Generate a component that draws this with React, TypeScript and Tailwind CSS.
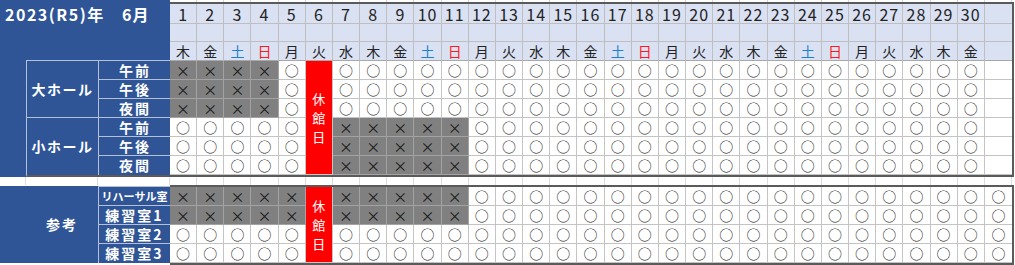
const weekdays = ["木", "金", "土", "日", "月", "火", "水"];
const cols = Array.from({ length: 31 }, (_, i) => i);

type Mark = "x" | "o" | "e";

const topRows: Mark[][] = Array.from({ length: 6 }, (_, r) =>
  cols.map((c) => {
    if (c === 30) return "e";
    if (r < 3) return c < 4 ? "x" : "o";
    return c >= 6 && c <= 10 ? "x" : "o";
  })
);

const refRows: Mark[][] = Array.from({ length: 4 }, (_, r) =>
  cols.map((c) => {
    if (r < 2 && (c < 5 || (c >= 6 && c <= 10))) return "x";
    return "o";
  })
);

const dayColor = (c: number) => {
  const w = weekdays[c % 7];
  if (w === "土") return "text-[#1f7fd0]";
  if (w === "日") return "text-[#ff1a1a]";
  return "text-[#222]";
};

const BodyCell = ({ mark, last }: { mark: Mark; last: boolean }) => (
  <div
    className={`flex items-center justify-center border-b text-[14px] leading-none ${
      last ? "" : "border-r"
    } ${
      mark === "x"
        ? "bg-[#808080] border-[#a3a3a3] text-[#1a1a1a]"
        : "bg-white border-[#c4c4c4] text-[#222]"
    }`}
  >
    {mark === "x" ? "×" : mark === "o" ? "○" : ""}
  </div>
);

const Closed = ({ span }: { span: 4 | 6 }) => (
  <div
    className={`${
      span === 6 ? "row-span-6" : "row-span-4"
    } flex flex-col items-center justify-center border-r border-b border-[#c4c4c4] bg-[#ff0000] text-[13px] leading-[19px] text-white`}
  >
    <span>休</span>
    <span>館</span>
    <span>日</span>
  </div>
);

const renderRows = (rows: Mark[][], span: 4 | 6) =>
  rows.flatMap((row, r) =>
    row.map((m, c) => {
      if (c === 5) return r === 0 ? <Closed key={`${r}-${c}`} span={span} /> : null;
      return <BodyCell key={`${r}-${c}`} mark={m} last={c === 30} />;
    })
  );

const SubLabel = ({ text, small, last }: { text: string; small?: boolean; last?: boolean }) => (
  <div
    className={`flex items-center justify-center font-bold text-white ${
      last ? "" : "border-b border-[#b4c0d8]"
    } ${small ? "text-[11px] tracking-[0px]" : "text-[14px] tracking-[2px]"}`}
  >
    {text}
  </div>
);

export default function App() {
  return (
    <div className="w-[1015px] h-[265px] overflow-hidden bg-white font-['Noto_Sans_CJK_JP','Noto_Sans',sans-serif]">
      {/* 上段: 見出し + ホール */}
      <div className="flex h-[177px]">
        <div className="flex w-[170px] flex-col">
          <div className="flex h-[60px] items-start bg-[#2f5597] pl-[5px] pt-[2px] text-[16px] font-bold text-white">
            <span className="w-[117px] tracking-[1.5px]">2023(R5)年</span>
            <span className="tracking-[1px]">6月</span>
          </div>
          <div className="flex h-[117px]">
            <div className="w-[26px] bg-[#2f5597]" />
            <div className="grid w-[144px] grid-cols-[72px_72px] grid-rows-[repeat(6,19px)] border-t border-l border-[#b4c0d8] border-b-2 border-b-[#5a5a5a] bg-[#2f5597]">
              <div className="row-span-3 flex items-center justify-center border-r border-b border-[#b4c0d8] text-[14px] font-bold tracking-[1.5px] text-white">
                大ホール
              </div>
              <SubLabel text="午前" />
              <SubLabel text="午後" />
              <SubLabel text="夜間" />
              <div className="row-span-3 flex items-center justify-center border-r border-[#b4c0d8] text-[14px] font-bold tracking-[1.5px] text-white">
                小ホール
              </div>
              <SubLabel text="午前" />
              <SubLabel text="午後" />
              <SubLabel text="夜間" last />
            </div>
          </div>
        </div>
        <div className="flex w-[844px] flex-col">
          <div className="grid h-[2px] w-[842px] grid-cols-[repeat(31,minmax(0,1fr))]">
            {cols.map((c) => (
              <div key={c} className="border-r border-[#d4d4d4]" />
            ))}
          </div>
          <div className="grid h-[175px] grid-cols-[repeat(31,minmax(0,1fr))] grid-rows-[20px_18px_19px_repeat(6,19px)] border-t-2 border-r-2 border-b-2 border-[#5a5a5a]">
            {cols.map((c) => (
              <div
                key={`n${c}`}
                className={`flex items-center justify-center border-b border-[#bfbfbf] bg-[#d9e1f2] text-[16px] leading-none tracking-[1px] text-[#222] ${
                  c === 30 ? "" : "border-r"
                }`}
              >
                {c < 30 ? c + 1 : ""}
              </div>
            ))}
            {cols.map((c) => (
              <div
                key={`b${c}`}
                className={`border-b border-[#bfbfbf] bg-[#d9e1f2] ${c === 30 ? "" : "border-r"}`}
              />
            ))}
            {cols.map((c) => (
              <div
                key={`w${c}`}
                className={`flex items-center justify-center border-b border-[#a8a8a8] bg-[#d9e1f2] text-[14px] leading-none ${dayColor(
                  c
                )} ${c === 30 ? "" : "border-r border-r-[#bfbfbf]"}`}
              >
                {c < 30 ? weekdays[c % 7] : ""}
              </div>
            ))}
            {renderRows(topRows, 6)}
          </div>
        </div>
      </div>

      {/* 区切り */}
      <div className="flex h-[8px]">
        <div className="w-[26px] border-r border-[#dcdcdc]" />
        <div className="w-[72px] border-r border-[#dcdcdc]" />
        <div className="w-[72px] border-r border-[#dcdcdc]" />
        <div className="grid w-[842px] grid-cols-[repeat(31,minmax(0,1fr))]">
          {cols.map((c) => (
            <div key={c} className="border-r border-[#dcdcdc]" />
          ))}
        </div>
      </div>

      {/* 下段: 参考 */}
      <div className="flex h-[80px]">
        <div className="flex w-[170px] flex-col">
          <div className="mt-[1px] flex h-[77px] bg-[#2f5597]">
            <div className="flex w-[98px] items-center justify-center pl-[26px] text-[14px] font-bold tracking-[2px] text-white">
              参考
            </div>
            <div className="grid w-[72px] grid-rows-[repeat(4,19px)] border-t border-l border-[#b4c0d8]">
              <SubLabel text="リハーサル室" small />
              <SubLabel text="練習室1" />
              <SubLabel text="練習室2" />
              <SubLabel text="練習室3" last />
            </div>
          </div>
        </div>
        <div className="grid h-[80px] w-[844px] grid-cols-[repeat(31,minmax(0,1fr))] grid-rows-[repeat(4,19px)] border-t-2 border-r-2 border-b-2 border-[#5a5a5a]">
          {renderRows(refRows, 4)}
        </div>
      </div>
    </div>
  );
}
